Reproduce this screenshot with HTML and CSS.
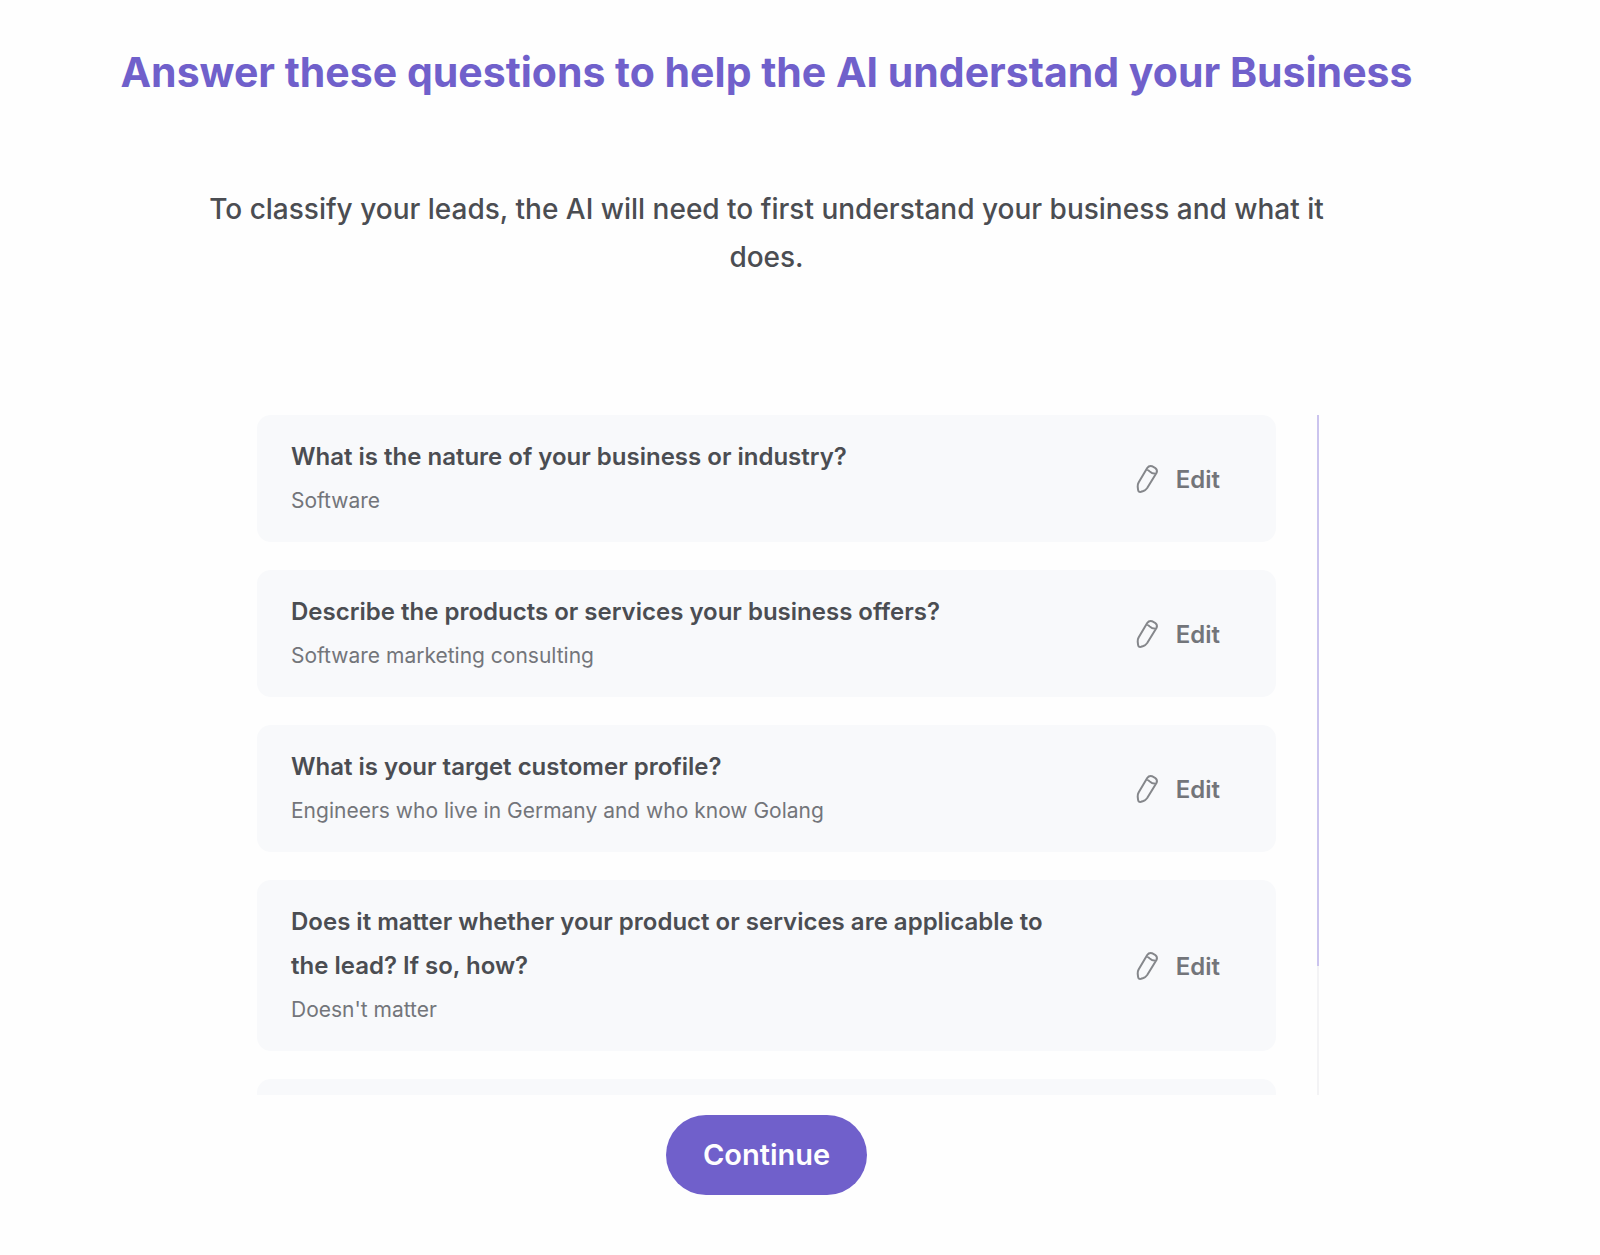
FILE: index.html
```html
<!DOCTYPE html>
<html lang="en">
<head>
<meta charset="utf-8">
<meta name="viewport" content="width=device-width, initial-scale=1">
<title>Business questions</title>
<link rel="stylesheet" href="styles.css">
</head>
<body>
<svg class="sprite" aria-hidden="true">
  <symbol id="pencil" viewBox="0 0 24 30">
    <path d="M2.6 18.4 L11.2 4 Q13 1.4 16 2.2 L19 3.8 Q21.8 5.8 20.6 8.8 L11.2 24 Q9.6 26.2 7.4 27 L5 27.8 Q2.4 28.4 2.1 26 L1.7 22.6 Q1.5 20.4 2.6 18.4 Z M10.8 5.6 Q12.4 6 13.6 7.4 Q15.6 9.6 19.6 9.8"/>
  </symbol>
</svg>
<main class="page">
  <h1 class="title">Answer these questions to help the AI understand your Business</h1>
  <p class="intro">To classify your leads, the AI will need to first understand your business and what it does.</p>
  <section class="questions">
    <ul class="list">
      <li class="card">
        <div class="card-text">
          <h2 class="question">What is the nature of your business or industry?</h2>
          <p class="answer">Software</p>
        </div>
        <button class="edit" type="button"><svg class="icon" aria-hidden="true"><use href="#pencil"/></svg>Edit</button>
      </li>
      <li class="card">
        <div class="card-text">
          <h2 class="question">Describe the products or services your business offers?</h2>
          <p class="answer">Software marketing consulting</p>
        </div>
        <button class="edit" type="button"><svg class="icon" aria-hidden="true"><use href="#pencil"/></svg>Edit</button>
      </li>
      <li class="card">
        <div class="card-text">
          <h2 class="question">What is your target customer profile?</h2>
          <p class="answer">Engineers who live in Germany and who know Golang</p>
        </div>
        <button class="edit" type="button"><svg class="icon" aria-hidden="true"><use href="#pencil"/></svg>Edit</button>
      </li>
      <li class="card">
        <div class="card-text">
          <h2 class="question">Does it matter whether your product or services are applicable to the lead? If so, how?</h2>
          <p class="answer">Doesn't matter</p>
        </div>
        <button class="edit" type="button"><svg class="icon" aria-hidden="true"><use href="#pencil"/></svg>Edit</button>
      </li>
      <li class="card card-empty"></li>
    </ul>
    <div class="track" aria-hidden="true"><div class="thumb"></div></div>
  </section>
  <button class="continue" type="button">Continue</button>
</main>
</body>
</html>
```

FILE: styles.css
```css
* {
  box-sizing: border-box;
}

body {
  margin: 0;
  background: #fefefe;
  color: #4b4d52;
  font-family: Inter, "Liberation Sans", sans-serif;
  font-optical-sizing: none;
}

h1, h2, p, ul {
  margin: 0;
  padding: 0;
}

button {
  border: 0;
  font: inherit;
  cursor: pointer;
}

.sprite {
  display: none;
}

.page {
  display: flex;
  flex-direction: column;
  align-items: center;
  padding: 40px 67px 60px 0;
}

.title {
  color: #7060cb;
  font-size: 41px;
  font-weight: 700;
  line-height: 64px;
  text-align: center;
}

.intro {
  max-width: 1150px;
  margin-top: 81px;
  font-size: 28px;
  font-weight: 500;
  line-height: 48px;
  text-align: center;
}

.questions {
  display: grid;
  grid-template-columns: 1fr minmax(0, 1019px) 1fr;
  align-self: stretch;
  margin-top: 134px;
}

.list {
  grid-column: 2;
  display: flex;
  flex-direction: column;
  gap: 28px;
  max-height: 680px;
  overflow-y: auto;
  scrollbar-width: none;
  list-style: none;
}

.card {
  display: flex;
  flex-shrink: 0;
  align-items: center;
  gap: 60px;
  padding: 20px 56px 19px 34px;
  border-radius: 14px;
  background: #f8f9fb;
}

.card-empty {
  min-height: 172px;
}

.card-text {
  flex: 1;
}

.question {
  font-size: 24px;
  font-weight: 600;
  line-height: 44px;
}

.answer {
  color: #73757a;
  font-size: 21px;
  line-height: 44px;
}

.edit {
  display: flex;
  align-items: center;
  gap: 16px;
  padding: 0;
  background: none;
  color: #73757a;
  font-size: 24px;
  font-weight: 600;
}

.icon {
  width: 24px;
  height: 30px;
  fill: none;
  stroke: #85878b;
  stroke-width: 2;
  stroke-linejoin: round;
}

.track {
  width: 2px;
  margin-left: 41px;
  background: #f3f3f5;
}

.thumb {
  height: 81%;
  background: #cbc4ee;
}

.continue {
  margin-top: 20px;
  padding: 0 37px;
  border-radius: 40px;
  background: #7060cb;
  color: #fefefe;
  font-size: 29px;
  font-weight: 600;
  line-height: 80px;
}
```
